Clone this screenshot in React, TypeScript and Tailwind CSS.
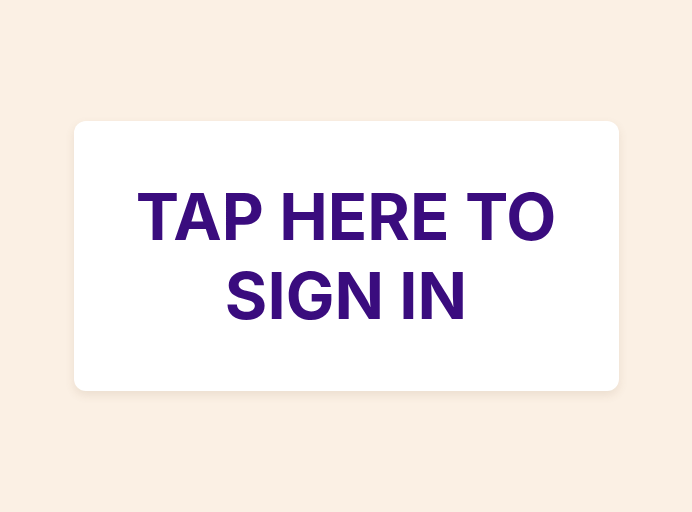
export default function App() {
  return (
    <div className="flex h-[512px] w-full items-center justify-center bg-[#fbf0e4]">
      <button
        type="button"
        className="flex h-[270px] w-[545px] items-center justify-center rounded-xl bg-white shadow-[0_4px_10px_rgba(120,90,60,0.12)]"
      >
        <span className="text-center font-['Inter',sans-serif] text-[65px] font-bold uppercase leading-[79px] text-[#3a0c7e]">
          Tap here to
          <br />
          sign in
        </span>
      </button>
    </div>
  );
}
